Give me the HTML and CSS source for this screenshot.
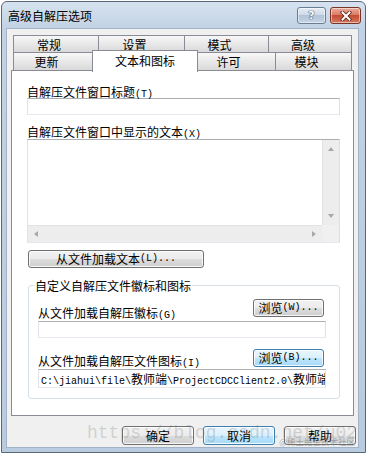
FILE: index.html
```html
<!DOCTYPE html>
<html lang="zh-CN">
<head>
    <meta charset="UTF-8">
    <meta name="viewport" content="width=device-width, initial-scale=1.0">
    <title>高级自解压选项</title>
    <link rel="stylesheet" href="styles.css">
</head>
<body>
    <div class="window">
        <div class="titlebar">
            <span class="title">高级自解压选项</span>
            <div class="caption">
                <span class="cap-btn help">?</span>
                <span class="cap-btn close">
                    <svg width="12" height="10" viewBox="0 0 12 10">
                        <path d="M2.5 1.5 L9.5 8.5 M9.5 1.5 L2.5 8.5" stroke="#5b2219" stroke-width="3.6" stroke-linecap="square"/>
                        <path d="M2.5 1.5 L9.5 8.5 M9.5 1.5 L2.5 8.5" stroke="#fff" stroke-width="2" stroke-linecap="square"/>
                    </svg>
                </span>
            </div>
        </div>

        <div class="client">
            <div class="tabs">
                <div class="tab-row back">
                    <div class="tab tab-general">常规</div>
                    <div class="tab tab-setup">设置</div>
                    <div class="tab tab-mode">模式</div>
                    <div class="tab tab-advanced">高级</div>
                </div>
                <div class="tab-row front">
                    <div class="tab tab-update">更新</div>
                    <div class="tab active">文本和图标</div>
                    <div class="tab tab-license">许可</div>
                    <div class="tab tab-module">模块</div>
                </div>
            </div>

            <div class="panel">
                <span class="lbl">自解压文件窗口标题<span class="key">(T)</span></span>
                <div class="edit title-edit"></div>

                <span class="lbl memo-label">自解压文件窗口中显示的文本<span class="key">(X)</span></span>
                <div class="memo">
                    <div class="memo-text"></div>
                    <div class="vscroll">
                        <span class="arrow up"></span>
                        <span class="arrow down"></span>
                    </div>
                    <div class="hscroll">
                        <span class="arrow left"></span>
                        <span class="arrow right"></span>
                    </div>
                    <div class="corner"></div>
                </div>

                <div class="btn load-btn">从文件加载文本<span class="key">(L)...</span></div>

                <div class="group">
                    <span class="group-title">自定义自解压文件徽标和图标</span>

                    <div class="browse-row">
                        <span class="lbl">从文件加载自解压徽标<span class="key">(G)</span></span>
                        <div class="btn browse-btn">浏览<span class="key">(W)...</span></div>
                    </div>
                    <div class="edit logo-edit"></div>

                    <div class="browse-row icon-row">
                        <span class="lbl">从文件加载自解压文件图标<span class="key">(I)</span></span>
                        <div class="btn browse-btn hot">浏览<span class="key">(B)...</span></div>
                    </div>
                    <div class="edit path-edit">C:\jiahui\file\<span class="cjk">教师端</span>\ProjectCDCClient2.0\<span class="cjk">教师端</span></div>
                </div>
            </div>

            <div class="dialog-buttons">
                <div class="btn">确定</div>
                <div class="btn hot">取消</div>
                <div class="btn">帮助</div>
            </div>
        </div>

        <div class="watermark">https://blog.csdn.net/u02</div>
        <div class="brand">@稀土掘金技术社区</div>
    </div>
</body>
</html>
```

FILE: styles.css
```css
body {
    margin: 0;
    background: #fff;
    font-family: "Noto Sans CJK SC", sans-serif;
    font-size: 12px;
    color: #000;
}
.window {
    position: relative;
    margin: 1px 0 0 1px;
    width: 365px;
    height: 452px;
    box-sizing: border-box;
    border: 1px solid #5a6779;
    border-radius: 6px 6px 0 0;
    background: linear-gradient(#d6e2ef, #c2d2e4 27px, #b9cbdf);
    display: flex;
    flex-direction: column;
}
.titlebar {
    flex: none;
    height: 27px;
    display: flex;
    align-items: center;
    justify-content: space-between;
    padding: 0 4px 0 6px;
}
.title {
    line-height: 14px;
}
.caption {
    display: flex;
    gap: 4px;
}
.cap-btn {
    height: 17px;
    box-sizing: border-box;
    border: 1px solid #6b7d93;
    border-radius: 3px;
    display: flex;
    align-items: center;
    justify-content: center;
    box-shadow: inset 0 0 0 1px rgba(255,255,255,0.5);
}
.help {
    width: 29px;
    background: linear-gradient(#e6edf5, #cbd8e6 50%, #b3c4d9 50%, #c6d4e4);
    font-family: "DejaVu Sans", sans-serif;
    font-weight: bold;
    font-size: 11px;
    color: #fff;
    text-shadow: 0 0 1px #3d4b5c, 0 0 1px #3d4b5c, 0 0 1px #3d4b5c;
}
.close {
    width: 31px;
    border-color: #7a3327;
    background: linear-gradient(#eaab9b, #d77a62 50%, #c44c33 50%, #d27a5e);
}
.client {
    flex: 1;
    margin: 0 7px 5px 5px;
    padding: 6px 4px 0;
    background: #f0f0f0;
    display: flex;
    flex-direction: column;
    box-shadow: 0 0 0 1px #a3b3c6;
}

/* tabs */
.tabs {
    padding-left: 2px;
}
.tab-row {
    display: flex;
}
.tab-row.back {
    height: 17px;
}
.tab-row.front {
    height: 18px;
}
.tab {
    box-sizing: border-box;
    height: 100%;
    border: 1px solid #898c95;
    border-bottom: none;
    background: linear-gradient(#f7f7f7, #e8e8e8 50%, #d9d9d9);
    display: flex;
    align-items: center;
    justify-content: center;
    padding: 2px 14px 0 0;
    line-height: 14px;
}
.tab + .tab {
    border-left: none;
}
.tab-row.front .tab {
    padding-top: 1px;
}
.tab-general { width: 86px; }
.tab-setup { width: 86px; }
.tab-mode { width: 84px; }
.tab-advanced { width: 83px; }
.tab-update { width: 81px; }
.tab-license { width: 80px; }
.tab-module { width: 76px; }
.tab-row.front .tab.active {
    position: relative;
    z-index: 1;
    width: 106px;
    height: 22px;
    margin: -2px -2px 0;
    padding: 0 0 2px;
    border-left: 1px solid #898c95;
    background: #fff;
}

/* panel */
.panel {
    height: 346px;
    box-sizing: border-box;
    border: 1px solid #898c95;
    background: #fff;
    padding: 15px 13px 0 15px;
}
.lbl {
    display: block;
    height: 12px;
    line-height: 12px;
    white-space: nowrap;
}
.key {
    font-family: "Liberation Mono", monospace;
    font-size: 10px;
}
.edit {
    box-sizing: border-box;
    height: 17px;
    border: 1px solid;
    border-color: #abadb3 #dbdfe6 #e3e9ef #e2e3ea;
    background: #fff;
}
.title-edit {
    margin-bottom: 11px;
}
.memo {
    margin-top: 1px;
    height: 104px;
    box-sizing: border-box;
    border: 1px solid;
    border-color: #abadb3 #dbdfe6 #e3e9ef #e2e3ea;
    display: grid;
    grid-template-columns: 1fr 17px;
    grid-template-rows: 1fr 17px;
}
.memo-text {
    background: #fff;
}
.vscroll, .hscroll {
    background: #ededed;
    display: flex;
    justify-content: space-between;
    align-items: center;
}
.vscroll {
    flex-direction: column;
    padding: 7px 0;
    border-left: 1px solid #e2e2e2;
}
.hscroll {
    padding: 0 6px;
    border-top: 1px solid #e2e2e2;
}
.corner {
    background: #f0f0f0;
}
.arrow {
    width: 0;
    height: 0;
    border: 3.5px solid transparent;
}
.arrow.up {
    border-top: none;
    border-bottom: 4px solid #a8a8a8;
}
.arrow.down {
    border-bottom: none;
    border-top: 4px solid #a8a8a8;
}
.arrow.left {
    border-left: none;
    border-right: 4px solid #a8a8a8;
}
.arrow.right {
    border-right: none;
    border-left: 4px solid #a8a8a8;
}

/* buttons */
.btn {
    box-sizing: border-box;
    height: 18px;
    border: 1px solid #707070;
    border-radius: 3px;
    background: linear-gradient(#f2f2f2, #ebebeb 50%, #dddddd 50%, #cfcfcf);
    box-shadow: inset 0 0 0 1px rgba(255,255,255,0.8);
    display: flex;
    align-items: center;
    justify-content: center;
    line-height: 14px;
    white-space: nowrap;
}
.btn.hot {
    border-color: #3c7fb1;
    background: linear-gradient(#eaf6fd, #d9f0fc 50%, #bee6fd 50%, #a7d9f5);
}
.load-btn {
    width: 176px;
    margin: 7px 0 0 1px;
}

/* group box */
.group {
    margin: 17px 0 0 1px;
    border: 1px solid #d5dfe5;
    border-radius: 3px;
    padding: 0 13px 10px 9px;
}
.group-title {
    display: block;
    width: max-content;
    margin: -7px 0 0 -4px;
    padding: 0 1px;
    background: #fff;
    line-height: 13px;
}
.browse-row {
    display: flex;
    justify-content: space-between;
    align-items: flex-end;
    margin-top: 7px;
}
.browse-row .lbl {
    margin-bottom: -2px;
}
.browse-row.icon-row {
    margin-top: 11px;
}
.browse-row.icon-row .lbl {
    margin-bottom: 0;
}
.browse-btn {
    width: 71px;
    margin-right: 2px;
}
.logo-edit {
    margin-top: 4px;
}
.path-edit {
    margin-top: 2px;
    height: 19px;
    padding-left: 2px;
    overflow: hidden;
    white-space: nowrap;
    font-family: "Liberation Mono", "Noto Sans CJK SC", monospace;
    font-size: 10px;
    line-height: 17px;
}
.path-edit .cjk {
    font-family: "Noto Sans CJK SC", sans-serif;
    font-size: 12px;
}

.dialog-buttons {
    display: flex;
    justify-content: flex-end;
    gap: 9px;
    margin: 10px -2px 0 0;
}
.dialog-buttons .btn {
    width: 72px;
    height: 19px;
}

/* screenshot watermarks */
.watermark {
    position: absolute;
    left: 85px;
    top: 421px;
    font-family: "Liberation Mono", monospace;
    font-size: 18px;
    line-height: 20px;
    color: rgba(110,110,110,0.25);
    white-space: nowrap;
    pointer-events: none;
}
.brand {
    position: absolute;
    right: 10px;
    top: 434px;
    font-size: 8.5px;
    line-height: 11px;
    color: rgba(120,120,120,0.6);
    white-space: nowrap;
}
```
